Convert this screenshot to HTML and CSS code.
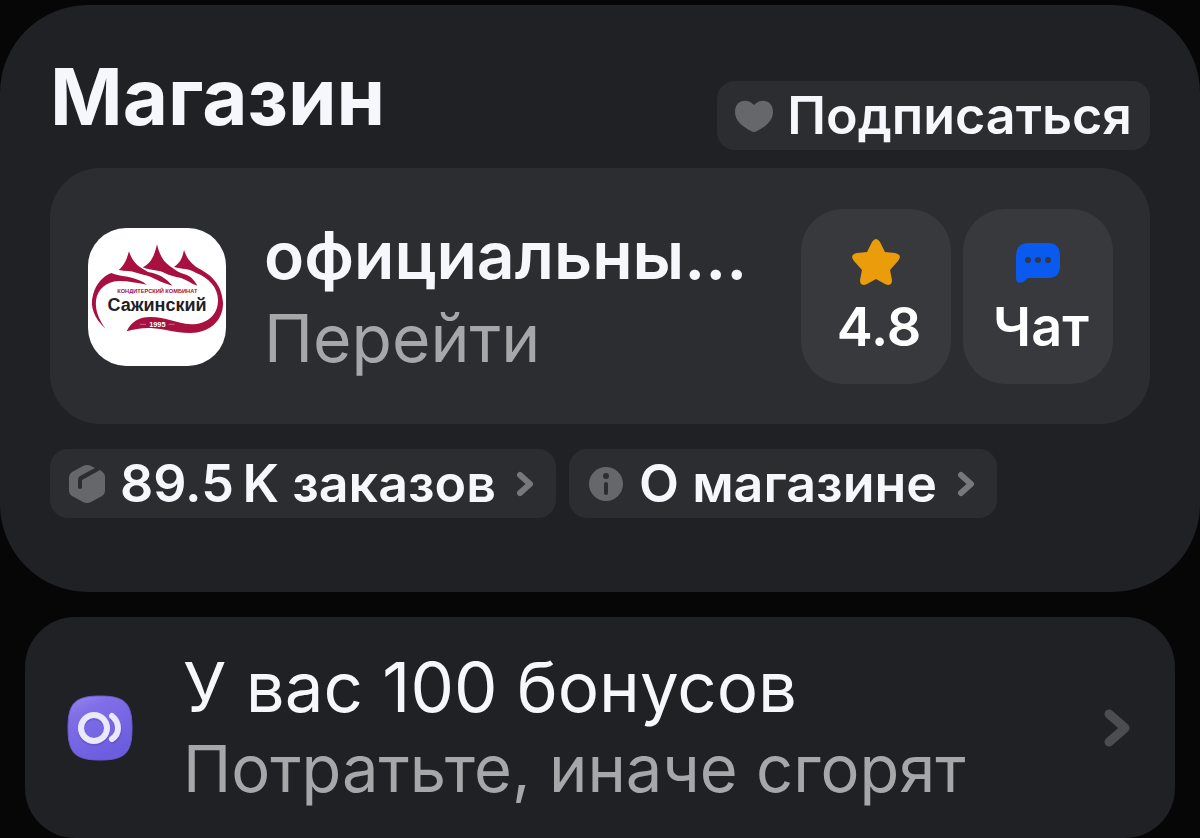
FILE: index.html
```html
<!DOCTYPE html>
<html lang="ru">
<head>
    <meta charset="utf-8">
    <meta name="viewport" content="width=device-width, initial-scale=1">
    <link rel="stylesheet" href="styles.css">
    <title>Магазин</title>
</head>
<body>
<section class="shop">
    <div class="shop-head">
        <h1>Магазин</h1>
        <button type="button" class="chip subscribe">
            <svg class="heart" viewBox="0 0 38 32"><path d="M19 5C13-2 0-1 0 12C0 21 8 27 16 31Q19 33 22 31C30 27 38 21 38 12C38-1 25-2 19 5Z"/></svg>
            <span>Подписаться</span>
        </button>
    </div>

    <div class="seller">
        <svg class="logo" viewBox="24 21 414 414">
            <rect x="24" y="21" width="414" height="414" fill="#fff"/>
            <g fill="#a8103f">
                <path d="M77 323C42 293 29 256 39 222C48 187 70 165 94 156Q104 160 116 163C145 168 178 173 200 191C168 185 141 179 116 180C78 182 53 205 48 238C45 268 57 298 77 323Z"/>
                <path d="M116 147C136 130 141 111 147 91C154 112 163 127 184 141L204 153C235 158 258 171 277 194C252 187 232 177 211 167C196 161 184 160 169 155C152 149 136 151 116 147Z"/>
                <path d="M188 139C216 126 224 99 231 70C238 98 247 119 270 136C285 147 299 156 314 160C331 164 344 179 352 194C333 188 321 177 303 171C284 168 270 163 255 157C237 146 215 150 188 139Z"/>
                <path d="M282 138C303 124 308 106 312 87C319 108 330 126 355 142C395 163 425 190 429 244C431 300 386 337 329 336C283 336 253 323 212 321C185 320 163 325 140 331C155 301 176 288 211 288C258 288 288 307 333 310C380 310 413 283 414 240C415 199 386 170 347 155C326 141 307 146 282 138Z"/>
            </g>
            <text class="logo-top" x="232" y="217" text-anchor="middle">КОНДИТЕРСКИЙ КОМБИНАТ</text>
            <text class="logo-name" x="231" y="270" text-anchor="middle">Сажинский</text>
            <text class="logo-year" x="232" y="317" text-anchor="middle">1995</text>
            <path d="M180 310h18M266 310h18" stroke="#dc94aa" stroke-width="2"/>
        </svg>
        <a href="#" class="seller-text">
            <span class="name">официальны...</span>
            <span class="grey">Перейти</span>
        </a>
        <div class="tiles">
            <a href="#" class="tile">
                <svg viewBox="0 0 48 48"><path fill="#eb9c0b" d="M20 3Q24-3 28 3L33 13L43 14Q51 16 46 22L38 31L40 41Q40 48 33 45L24 40L15 45Q8 48 8 41L10 31L2 22Q-3 16 5 14L15 13Z"/></svg>
                <span>4.8</span>
            </a>
            <a href="#" class="tile">
                <svg viewBox="0 0 48 48"><path fill="#0b5aef" d="M15 4H34Q46 4 46 17V27Q46 39 34 39H14L9 43Q2 46 2 38V17Q2 4 15 4Z"/><g fill="#303849"><circle cx="14" cy="21" r="3"/><circle cx="24" cy="21" r="3"/><circle cx="34" cy="21" r="3"/></g></svg>
                <span>Чат</span>
            </a>
        </div>
    </div>

    <div class="chips">
        <a href="#" class="chip">
            <svg class="mark" viewBox="0 0 36 40"><path d="M14 2Q18 0 22 2L26 4L11 12Q9 13 9 16V23Q9 25 11 25T13 23V16L31 6Q36 9 36 13V27Q36 30 33 32L22 38Q18 40 14 38L3 32Q0 30 0 27V13Q0 10 3 8Z"/></svg>
            <span>89.5&#8201;K заказов</span>
            <svg class="arrow" viewBox="0 0 18 26"><path d="M4 4L14 13L4 22"/></svg>
        </a>
        <a href="#" class="chip">
            <svg class="mark" viewBox="0 0 36 40"><circle cx="18" cy="20" r="17"/><g fill="#2c2d31"><circle cx="18" cy="12" r="3"/><rect x="16" y="18" width="4" height="13" rx="2"/></g></svg>
            <span>О магазине</span>
            <svg class="arrow" viewBox="0 0 18 26"><path d="M4 4L14 13L4 22"/></svg>
        </a>
    </div>
</section>

<a href="#" class="bonus">
    <svg class="bonus-icon" viewBox="0 0 66 66">
        <defs>
            <linearGradient id="violet" x1="0" y1="0" x2="0.5" y2="1">
                <stop offset="0" stop-color="#9a88ee"/>
                <stop offset="0.3" stop-color="#7f6ee6"/>
                <stop offset="1" stop-color="#6c5de0"/>
            </linearGradient>
        </defs>
        <path fill="url(#violet)" stroke="#6a5bce" d="M33 1C58 1 65 8 65 33S58 65 33 65S1 58 1 33S8 1 33 1Z"/>
        <g fill="none" stroke="#5546bd" stroke-width="6" stroke-linecap="round" opacity=".4">
            <circle cx="27" cy="35" r="13"/>
            <path d="M46 23Q52 28 52 35T46 46"/>
        </g>
        <g fill="none" stroke="#ece8fb" stroke-width="6" stroke-linecap="round">
            <circle cx="27" cy="33" r="13"/>
            <path d="M45 21Q51 26 51 33T45 44"/>
        </g>
    </svg>
    <span class="bonus-text">
        <span class="bonus-title">У вас 100 бонусов</span>
        <span class="grey">Потратьте, иначе сгорят</span>
    </span>
    <svg class="bonus-arrow" viewBox="0 0 28 40"><path d="M6 6L22 20L6 34"/></svg>
</a>
</body>
</html>
```
FILE: styles.css
```css
* {
    box-sizing: border-box;
}
body {
    margin: 0;
    padding-top: 5px;
    background: #060606;
    color: #f6f7fc;
    font-family: Inter, "Liberation Sans", sans-serif;
}
a {
    color: inherit;
    text-decoration: none;
}
svg {
    display: block;
    flex-shrink: 0;
}
.shop {
    padding: 50px 50px 74px;
    background: #202125;
    border-radius: 88px;
}
.shop-head {
    display: flex;
    justify-content: space-between;
    align-items: flex-end;
}
h1 {
    margin: 0 0 11px;
    font-size: 78px;
    line-height: 84px;
    font-weight: 700;
}
.chip {
    display: flex;
    align-items: center;
    height: 69px;
    padding: 0 22px 0 18px;
    border: none;
    border-radius: 18px;
    background: #2c2d31;
    color: inherit;
    font-family: inherit;
    font-size: 52px;
    line-height: 66px;
    font-weight: 600;
    white-space: nowrap;
}
.subscribe {
    gap: 14px;
    padding: 0 18px;
}
.heart {
    width: 38px;
    height: 32px;
    fill: #66676a;
}
.seller {
    display: flex;
    align-items: center;
    margin-top: 18px;
    padding: 41px 37px 40px 38px;
    border-radius: 50px;
    background: #2c2d31;
}
.logo {
    width: 138px;
    height: 138px;
    border-radius: 38px;
}
.logo-top {
    font: 700 17px "Liberation Sans", sans-serif;
    fill: #a8103f;
}
.logo-name {
    font: 700 54px "Liberation Sans", sans-serif;
    fill: #232025;
}
.logo-year {
    font: 700 22px "Liberation Sans", sans-serif;
    fill: #fff;
}
.seller-text {
    flex: 1;
    min-width: 0;
    margin: 0 38px;
    font-size: 66px;
    line-height: 83px;
    white-space: nowrap;
}
.seller-text span,
.bonus-text span {
    display: block;
}
.name {
    font-weight: 600;
}
.grey {
    color: #a6a7a9;
}
.tiles {
    display: flex;
    gap: 12px;
}
.tile {
    display: flex;
    flex-direction: column;
    align-items: center;
    width: 150px;
    height: 175px;
    padding-top: 30px;
    border-radius: 42px;
    background: #38393c;
    color: #fff;
    font-size: 54px;
    line-height: 80px;
    font-weight: 600;
}
.tile svg {
    width: 48px;
    height: 48px;
}
.tile span {
    margin-left: 6px;
}
.chips {
    display: flex;
    gap: 13px;
    margin-top: 25px;
}
.mark {
    width: 38px;
    height: 40px;
    margin-right: 14px;
    fill: #66676a;
}
.arrow {
    width: 18px;
    height: 26px;
    margin-left: 20px;
    fill: none;
    stroke: #77787a;
    stroke-width: 6;
    stroke-linecap: round;
    stroke-linejoin: round;
}
.bonus {
    display: flex;
    align-items: center;
    margin: 25px 25px 0;
    padding: 29px 44px 28px 42px;
    border-radius: 50px;
    background: #202125;
}
.bonus-icon {
    width: 66px;
    height: 66px;
}
.bonus-text {
    flex: 1;
    margin-left: 50px;
    font-size: 65px;
    line-height: 82px;
}
.bonus-title {
    font-size: 69px;
}
.bonus-arrow {
    width: 28px;
    height: 40px;
    fill: none;
    stroke: #4c4d50;
    stroke-width: 9;
    stroke-linecap: round;
    stroke-linejoin: round;
}
```
